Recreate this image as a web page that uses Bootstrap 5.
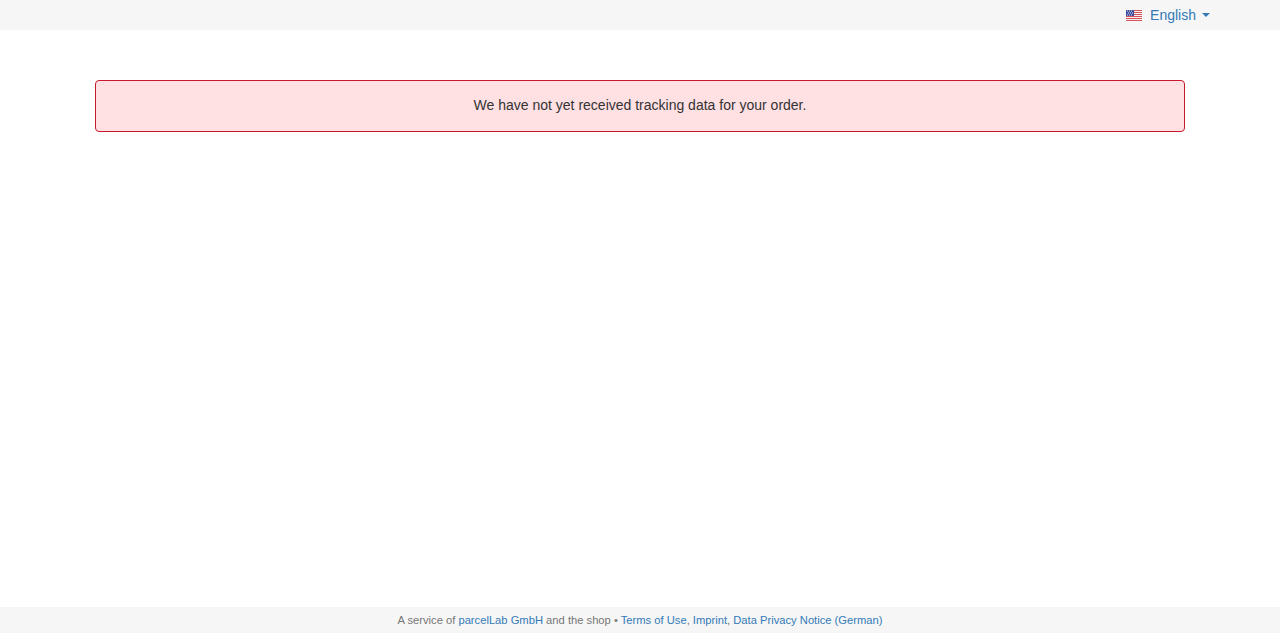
<!DOCTYPE html>
<html lang="en">
<head>
  <meta charset="UTF-8">
  <meta name="viewport" content="width=device-width, initial-scale=1">
  <title>Order tracking</title>
  <link href="https://cdn.jsdelivr.net/npm/bootstrap@5.3.0/dist/css/bootstrap.min.css" rel="stylesheet">
  <style>
    body {
      font-family: "Liberation Sans", Arial, sans-serif;
      font-size: 14px;
      line-height: 20px;
      color: #333;
      background-color: #fff;
    }
    a {
      color: #337ab7;
      text-decoration: none;
    }
    .top-strip {
      height: 30px;
      background-color: #f6f6f6;
      padding-right: 70px;
    }
    .lang-toggle {
      gap: 8px;
    }
    .lang-toggle::after {
      margin-left: -2px;
      vertical-align: middle;
      border-top: 4px solid;
      border-right: 4px solid transparent;
      border-left: 4px solid transparent;
      border-bottom: 0;
    }
    .lang-flag {
      display: block;
      width: 16px;
      height: 11px;
    }
    .notice-wrap {
      width: 1090px;
      margin: 50px auto 0;
    }
    .notice {
      padding: 14px 15px 16px;
      margin: 0;
      background-color: #ffe0e3;
      border: 1px solid #c9182b;
      border-radius: 4px;
      color: #333;
    }
    .foot-strip {
      height: 26px;
      background-color: #f6f6f6;
      font-size: 11.2px;
      line-height: 26px;
      color: #777;
    }
  </style>
</head>
<body>
  <div class="d-flex flex-column vh-100">
    <!-- language switch -->
    <div class="top-strip d-flex justify-content-end align-items-center">
      <a href="#" class="lang-toggle dropdown-toggle d-flex align-items-center" data-bs-toggle="dropdown">
        <svg class="lang-flag" viewBox="0 0 16 11" xmlns="http://www.w3.org/2000/svg">
          <rect width="16" height="11" fill="#f4f1f1"/>
          <rect y="0" width="16" height="1" fill="#d8525a"/>
          <rect y="2" width="16" height="1" fill="#d8525a"/>
          <rect y="4" width="16" height="1" fill="#d8525a"/>
          <rect y="6" width="16" height="1" fill="#d8525a"/>
          <rect y="8" width="16" height="1" fill="#d8525a"/>
          <rect y="10" width="16" height="1" fill="#d8525a"/>
          <rect width="8" height="6" fill="#3f4f9c"/>
          <path d="M1 1h1M3 1h1M5 1h1M2 3h1M4 3h1M6 3h1M1 5h1M3 5h1M5 5h1" stroke="#dfe3f5" stroke-width="1"/>
        </svg>
        English
      </a>
      <ul class="dropdown-menu dropdown-menu-end">
        <li><a class="dropdown-item" href="#">English</a></li>
        <li><a class="dropdown-item" href="#">Deutsch</a></li>
      </ul>
    </div>

    <div class="notice-wrap flex-grow-1">
      <div class="alert notice text-center" role="alert">We have not yet received tracking data for your order.</div>
    </div>

    <footer class="foot-strip text-center">
      A service of <a href="#">parcelLab GmbH</a> and the shop &bull; <a href="#">Terms of Use</a>, <a href="#">Imprint</a>, <a href="#">Data Privacy Notice (German)</a>
    </footer>
  </div>
  <script src="https://cdn.jsdelivr.net/npm/bootstrap@5.3.0/dist/js/bootstrap.bundle.min.js"></script>
</body>
</html>
